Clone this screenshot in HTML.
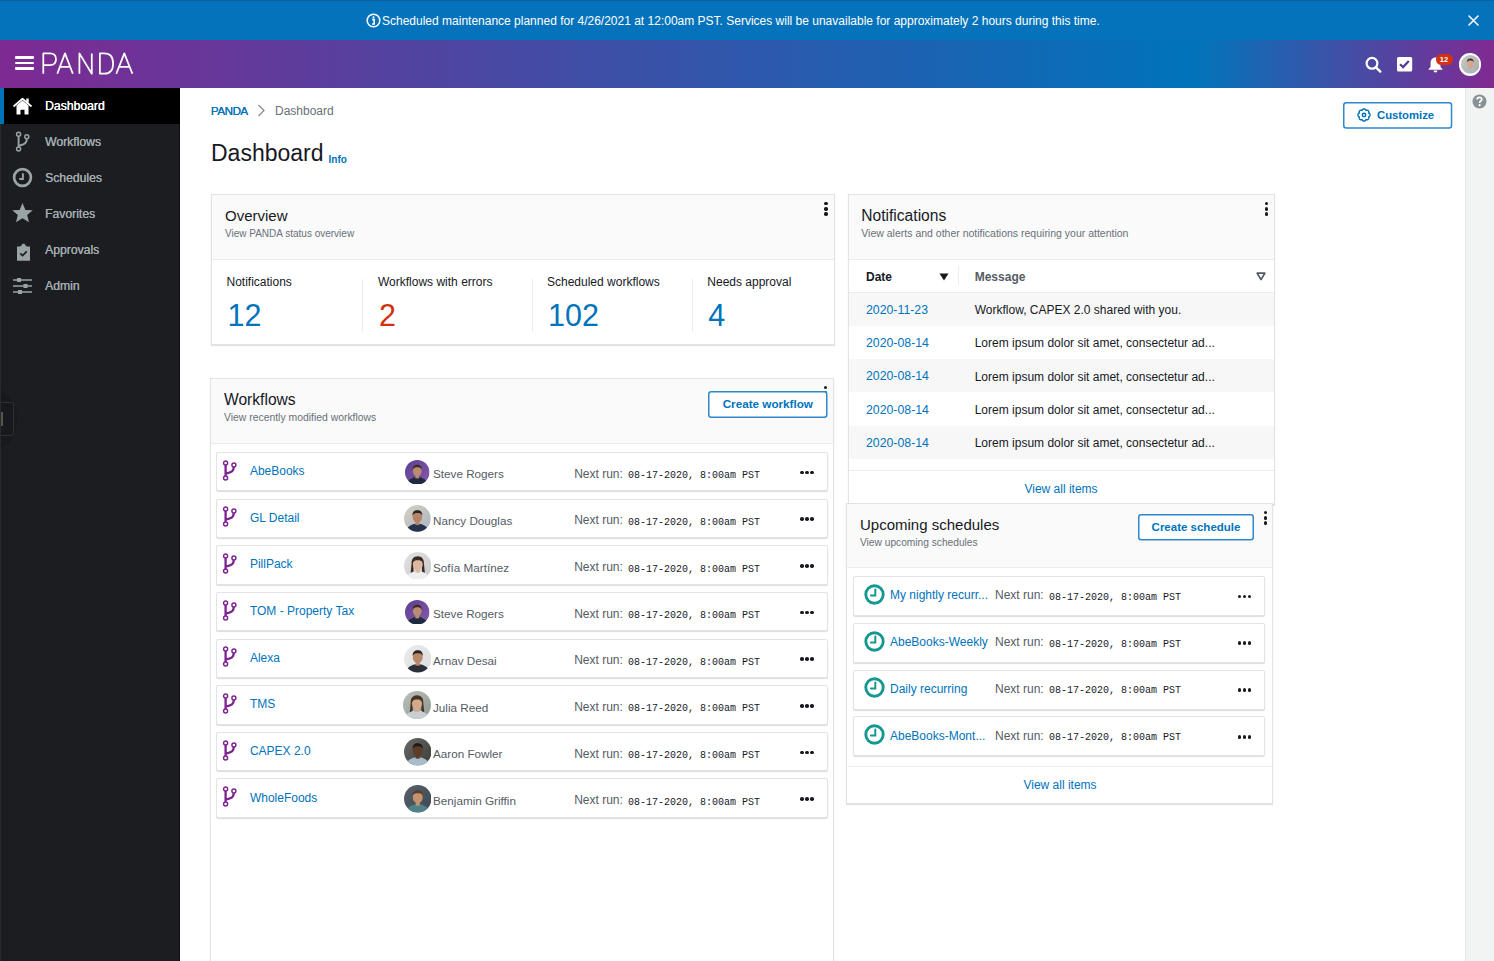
<!DOCTYPE html>
<html><head><meta charset="utf-8"><title>PANDA Dashboard</title>
<style>
html,body{margin:0;padding:0;width:1494px;height:961px;overflow:hidden;background:#fff;font-family:'Liberation Sans', sans-serif;}
.t{position:absolute;white-space:nowrap;}
</style></head><body>
<div style="position:absolute;left:0px;top:0px;width:1494px;height:40px;background:#0573bb;"></div>
<div style="position:absolute;left:0px;top:0px;width:1494px;height:1px;background:#0b5f9c;"></div>
<svg style="position:absolute;left:366px;top:13px" width="15" height="15" viewBox="0 0 15 15"><circle cx="7.5" cy="7.5" r="6.3" fill="none" stroke="#fff" stroke-width="1.6"/><circle cx="7.5" cy="4.4" r="1.1" fill="#fff"/><path d="M6.2 6.6h2v4.4M6 11h3" stroke="#fff" stroke-width="1.6" fill="none"/></svg>
<div class="t" style="left:382px;top:14.54px;font-size:12px;line-height:12px;color:#fff;font-weight:400;font-family:'Liberation Sans', sans-serif;">Scheduled maintenance planned for 4/26/2021 at 12:00am PST. Services will be unavailable for approximately 2 hours during this time.</div>
<svg style="position:absolute;left:1467.5px;top:15px" width="11" height="11" viewBox="0 0 11 11"><path d="M1 1L10 10M10 1L1 10" stroke="#fafafa" stroke-width="1.6" stroke-linecap="round"/></svg>
<div style="position:absolute;left:0px;top:40px;width:1494px;height:48px;background:linear-gradient(90deg,#7d2a92 0px,#0073bb 1185px,#0672b9 1205px,#802a92 1494px);"></div>
<div style="position:absolute;left:15px;top:56px;width:19px;height:2.6px;background:#fff;border-radius:1px;"></div>
<div style="position:absolute;left:15px;top:61.6px;width:19px;height:2.6px;background:#fff;border-radius:1px;"></div>
<div style="position:absolute;left:15px;top:67.2px;width:19px;height:2.6px;background:#fff;border-radius:1px;"></div>
<svg style="position:absolute;left:0;top:0" width="140" height="88" viewBox="0 0 140 88"><g fill="none" stroke="#fff" stroke-width="1.75" stroke-linejoin="round"><path d="M43.3 73.7V53.4H50C54 53.4 56 55.9 56 59.3C56 62.8 54 65.2 50 65.2H43.3"/><path d="M57.3 73.7L65 53.4L72.8 73.7M59.9 66.9H70.3"/><path d="M79.4 73.7V53.4L91.8 73.7V53.4"/><path d="M99.9 73.7V53.4H104.3C110.3 53.4 113.1 57.6 113.1 63.5C113.1 69.5 110.3 73.7 104.3 73.7Z"/><path d="M116.3 73.7L124.3 53.4L132.4 73.7M118.9 66.9H129.8"/></g></svg>
<svg style="position:absolute;left:1364px;top:55px" width="20" height="20" viewBox="0 0 20 20"><circle cx="8" cy="8.3" r="5.4" fill="none" stroke="#fff" stroke-width="2.2"/><path d="M12 12.3L16.3 16.6" stroke="#fff" stroke-width="2.4" stroke-linecap="round"/></svg>
<svg style="position:absolute;left:1396px;top:56px" width="17" height="17" viewBox="0 0 17 17"><rect x="1" y="1" width="15.2" height="14.6" rx="1.6" fill="#fff"/><path d="M4 8.2L7.1 11.1L12.8 5" fill="none" stroke="#5a3898" stroke-width="2.2"/></svg>
<svg style="position:absolute;left:1426px;top:55px" width="19" height="19" viewBox="0 0 19 19"><path d="M9.5 2.5C6.3 2.5 4.6 4.9 4.6 8V11.8L2.2 14.8H16.8L14.4 11.8V8C14.4 4.9 12.7 2.5 9.5 2.5Z" fill="#fff"/><path d="M7.6 15.6a1.9 1.9 0 0 0 3.8 0z" fill="#fff"/></svg>
<div style="position:absolute;left:1436px;top:54.3px;width:16.5px;height:10.5px;background:#d13212;border-radius:6px;"></div>
<div class="t" style="left:1437.5px;top:56.05px;font-size:7.5px;line-height:7.5px;color:#fff;font-weight:700;font-family:'Liberation Sans', sans-serif;width:13px;text-align:center;">12</div>
<div style="position:absolute;left:1458.6px;top:53.4px;width:22.4px;height:22.4px;border-radius:50%;background:#fff;"></div>
<svg style="position:absolute;left:1460.50px;top:55.30px" width="18.6" height="18.6" viewBox="0 0 24 24"><defs><clipPath id="av1"><circle cx="12" cy="12" r="12"/></clipPath><linearGradient id="ag1" x1="0" y1="0" x2="1" y2="1"><stop offset="0" stop-color="#c9c9c7"/><stop offset="1" stop-color="#a9aaa8"/></linearGradient></defs><g clip-path="url(#av1)"><rect width="24" height="24" fill="url(#ag1)"/><ellipse cx="12" cy="25" rx="10.5" ry="8.5" fill="#aeb8bf"/><rect x="10.2" y="13" width="3.6" height="5" fill="#d4a78e"/><ellipse cx="12" cy="10.6" rx="4.3" ry="5.3" fill="#d4a78e"/><path d="M7.6 9.6C7.4 6.2 9.2 4.6 12 4.6S16.6 6.2 16.4 9.6C15.6 7.6 14 7.2 12 7.2S8.4 7.6 7.6 9.6Z" fill="#2e3036"/></g></svg>
<div style="position:absolute;left:0px;top:88px;width:180px;height:873px;background:#1b1d21;"></div>
<div style="position:absolute;left:179px;top:88px;width:1px;height:873px;background:#0d0f13;"></div>
<div style="position:absolute;left:0px;top:88px;width:180px;height:36px;background:#000;"></div>
<div style="position:absolute;left:-20px;top:391px;width:37px;height:57px;border-radius:50%;background:#17191d;"></div>
<div style="position:absolute;left:-2px;top:401.5px;width:15.5px;height:34.5px;border:1.3px solid #2c2f33;border-radius:2px;box-sizing:border-box;"></div>
<div style="position:absolute;left:0px;top:412px;width:3px;height:14px;background:#50554a;border:0.8px solid #5a5840;box-sizing:border-box;"></div>
<div style="position:absolute;left:0px;top:124px;width:1px;height:837px;background:#26292d;"></div>
<div style="position:absolute;left:0px;top:88px;width:4px;height:36px;background:#0073bb;"></div>
<div class="t" style="left:45px;top:100.17px;font-size:12.2px;line-height:12.2px;color:#fff;font-weight:400;font-family:'Liberation Sans', sans-serif;text-shadow:0.3px 0 0 #fff;">Dashboard</div>
<div class="t" style="left:45px;top:136.17px;font-size:12.2px;line-height:12.2px;color:#a3adb0;font-weight:400;font-family:'Liberation Sans', sans-serif;text-shadow:0.15px 0 0 #a3adb0;">Workflows</div>
<div class="t" style="left:45px;top:172.17px;font-size:12.2px;line-height:12.2px;color:#a3adb0;font-weight:400;font-family:'Liberation Sans', sans-serif;text-shadow:0.15px 0 0 #a3adb0;">Schedules</div>
<div class="t" style="left:45px;top:208.17px;font-size:12.2px;line-height:12.2px;color:#a3adb0;font-weight:400;font-family:'Liberation Sans', sans-serif;text-shadow:0.15px 0 0 #a3adb0;">Favorites</div>
<div class="t" style="left:45px;top:244.17px;font-size:12.2px;line-height:12.2px;color:#a3adb0;font-weight:400;font-family:'Liberation Sans', sans-serif;text-shadow:0.15px 0 0 #a3adb0;">Approvals</div>
<div class="t" style="left:45px;top:280.17px;font-size:12.2px;line-height:12.2px;color:#a3adb0;font-weight:400;font-family:'Liberation Sans', sans-serif;text-shadow:0.15px 0 0 #a3adb0;">Admin</div>
<svg style="position:absolute;left:12px;top:97px" width="21" height="19" viewBox="0 0 21 19"><path d="M1.5 9.5L10.5 1.8L19.5 9.5" fill="none" stroke="#fff" stroke-width="1.8" stroke-linejoin="round"/><path d="M4.5 8.5V17.5H8.5V12.8H12.5V17.5H16.5V8.5L10.5 3.5Z" fill="#fff"/><rect x="14.3" y="1.5" width="2.4" height="5" fill="#fff"/></svg>
<svg style="position:absolute;left:14px;top:131px" width="18" height="21" viewBox="0 0 18 21"><g fill="none" stroke="#9aa3a6"><circle cx="4.6" cy="3.2" r="2" stroke-width="1.5"/><circle cx="12.8" cy="5.7" r="2" stroke-width="1.5"/><circle cx="4.6" cy="18" r="2" stroke-width="1.5"/><path d="M4.6 5.2V16M12.8 7.7C12.8 12 11 13.4 4.8 14.8" stroke-width="1.9"/></g></svg>
<svg style="position:absolute;left:11.7px;top:167.3px" width="21" height="21" viewBox="0 0 21 21"><circle cx="10.5" cy="10.5" r="8.4" fill="none" stroke="#9aa3a6" stroke-width="2.7"/><path d="M10.9 6.2V12H7.3" fill="none" stroke="#9aa3a6" stroke-width="1.9"/></svg>
<svg style="position:absolute;left:11px;top:202px" width="23" height="22" viewBox="0 0 23 22"><path d="M11.5 1L14.4 7.9L21.7 8.3L16.2 13L18 20.3L11.5 16.3L5 20.3L6.8 13L1.3 8.3L8.6 7.9Z" fill="#9aa3a6"/></svg>
<svg style="position:absolute;left:15px;top:243px" width="17" height="19" viewBox="0 0 17 19"><path d="M2 3.5H5.5V2.8H6.5C6.6 1.3 7.4 0.8 8.5 0.8S10.4 1.3 10.5 2.8H11.5V3.5H15V17.8H2Z" fill="#9aa3a6"/><path d="M5.3 10.4L7.6 12.6L11.8 8.3" fill="none" stroke="#1b1d21" stroke-width="1.7"/></svg>
<svg style="position:absolute;left:12px;top:277px" width="21" height="18" viewBox="0 0 21 18"><path d="M1 3H20M1 9H20M1 15H20" stroke="#9aa3a6" stroke-width="1.5"/><rect x="5" y="1" width="4" height="4" fill="#9aa3a6"/><rect x="11.5" y="7" width="4" height="4" fill="#9aa3a6"/><rect x="6" y="13" width="4" height="4" fill="#9aa3a6"/></svg>
<div style="position:absolute;left:1465px;top:88px;width:29px;height:873px;background:#f2f3f3;border-left:1px solid #e4e7e7;box-sizing:border-box;"></div>
<svg style="position:absolute;left:1472px;top:93.5px" width="15" height="15" viewBox="0 0 15 15"><circle cx="7.5" cy="7.5" r="7" fill="#879196"/><path d="M5.2 5.6C5.2 4.2 6.2 3.4 7.5 3.4S9.8 4.2 9.8 5.5C9.8 7 7.6 7.1 7.6 8.9" fill="none" stroke="#fff" stroke-width="1.7"/><circle cx="7.6" cy="11.2" r="1.1" fill="#fff"/></svg>
<div class="t" style="left:210.8px;top:105.08px;font-size:11.6px;line-height:11.6px;color:#0073bb;font-weight:400;font-family:'Liberation Sans', sans-serif;letter-spacing:-0.45px;text-shadow:0.25px 0 0 #0073bb;">PANDA</div>
<svg style="position:absolute;left:257px;top:104px" width="9" height="13" viewBox="0 0 9 13"><path d="M1.5 1L7 6.5L1.5 12" fill="none" stroke="#879196" stroke-width="1.3"/></svg>
<div class="t" style="left:275px;top:104.64px;font-size:12px;line-height:12px;color:#687078;font-weight:400;font-family:'Liberation Sans', sans-serif;">Dashboard</div>
<div class="t" style="left:211px;top:142.43px;font-size:23px;line-height:23px;color:#16191f;font-weight:400;font-family:'Liberation Sans', sans-serif;">Dashboard</div>
<div class="t" style="left:328.5px;top:155.44px;font-size:10px;line-height:10px;color:#0073bb;font-weight:700;font-family:'Liberation Sans', sans-serif;">Info</div>
<svg style="position:absolute;left:1342.5px;top:102px" width="110.3" height="27.8" viewBox="0 0 110.3 27.8"><rect x="0.75" y="0.75" width="107.8" height="25.3" rx="2.5" fill="#fff" stroke="#2f88c9" stroke-width="1.5"/></svg>
<svg style="position:absolute;left:1356.6px;top:108.1px" width="14" height="14" viewBox="0 0 14 14"><path d="M13.00 7.00 L12.99 7.24 L12.94 7.47 L12.87 7.69 L12.77 7.91 L12.65 8.12 L12.50 8.32 L12.32 8.50 L12.13 8.67 L11.90 8.81 L11.62 8.91 L11.75 9.19 L11.80 9.45 L11.83 9.70 L11.82 9.95 L11.79 10.20 L11.73 10.44 L11.64 10.66 L11.53 10.87 L11.40 11.07 L11.24 11.24 L11.07 11.40 L10.87 11.53 L10.66 11.64 L10.44 11.73 L10.20 11.79 L9.95 11.82 L9.70 11.83 L9.45 11.80 L9.19 11.75 L8.91 11.62 L8.81 11.90 L8.67 12.13 L8.50 12.32 L8.32 12.50 L8.12 12.65 L7.91 12.77 L7.69 12.87 L7.47 12.94 L7.24 12.99 L7.00 13.00 L6.76 12.99 L6.53 12.94 L6.31 12.87 L6.09 12.77 L5.88 12.65 L5.68 12.50 L5.50 12.32 L5.33 12.13 L5.19 11.90 L5.09 11.62 L4.81 11.75 L4.55 11.80 L4.30 11.83 L4.05 11.82 L3.80 11.79 L3.56 11.73 L3.34 11.64 L3.13 11.53 L2.93 11.40 L2.76 11.24 L2.60 11.07 L2.47 10.87 L2.36 10.66 L2.27 10.44 L2.21 10.20 L2.18 9.95 L2.17 9.70 L2.20 9.45 L2.25 9.19 L2.38 8.91 L2.10 8.81 L1.87 8.67 L1.68 8.50 L1.50 8.32 L1.35 8.12 L1.23 7.91 L1.13 7.69 L1.06 7.47 L1.01 7.24 L1.00 7.00 L1.01 6.76 L1.06 6.53 L1.13 6.31 L1.23 6.09 L1.35 5.88 L1.50 5.68 L1.68 5.50 L1.87 5.33 L2.10 5.19 L2.38 5.09 L2.25 4.81 L2.20 4.55 L2.17 4.30 L2.18 4.05 L2.21 3.80 L2.27 3.56 L2.36 3.34 L2.47 3.13 L2.60 2.93 L2.76 2.76 L2.93 2.60 L3.13 2.47 L3.34 2.36 L3.56 2.27 L3.80 2.21 L4.05 2.18 L4.30 2.17 L4.55 2.20 L4.81 2.25 L5.09 2.38 L5.19 2.10 L5.33 1.87 L5.50 1.68 L5.68 1.50 L5.88 1.35 L6.09 1.23 L6.31 1.13 L6.53 1.06 L6.76 1.01 L7.00 1.00 L7.24 1.01 L7.47 1.06 L7.69 1.13 L7.91 1.23 L8.12 1.35 L8.32 1.50 L8.50 1.68 L8.67 1.87 L8.81 2.10 L8.91 2.38 L9.19 2.25 L9.45 2.20 L9.70 2.17 L9.95 2.18 L10.20 2.21 L10.44 2.27 L10.66 2.36 L10.87 2.47 L11.07 2.60 L11.24 2.76 L11.40 2.93 L11.53 3.13 L11.64 3.34 L11.73 3.56 L11.79 3.80 L11.82 4.05 L11.83 4.30 L11.80 4.55 L11.75 4.81 L11.62 5.09 L11.90 5.19 L12.13 5.33 L12.32 5.50 L12.50 5.68 L12.65 5.88 L12.77 6.09 L12.87 6.31 L12.94 6.53 L12.99 6.76 L13.00 7.00Z" fill="none" stroke="#0073bb" stroke-width="1.45" stroke-linejoin="round"/><circle cx="7" cy="7" r="1.7" fill="none" stroke="#0073bb" stroke-width="1.5"/></svg>
<div class="t" style="left:1377px;top:109.93px;font-size:11.3px;line-height:11.3px;color:#0073bb;font-weight:700;font-family:'Liberation Sans', sans-serif;">Customize</div>
<div style="position:absolute;left:211px;top:194px;width:623.5px;height:151px;background:#fff;border:1px solid #e1e4e4;box-sizing:border-box;box-shadow:0 1px 1px rgba(0,28,36,.12);"></div>
<div style="position:absolute;left:212px;top:195px;width:621.5px;height:65px;background:#fafafa;border-bottom:1px solid #eaeded;box-sizing:border-box;"></div>
<div class="t" style="left:225px;top:207.60px;font-size:15px;line-height:15px;color:#16191f;font-weight:400;font-family:'Liberation Sans', sans-serif;">Overview</div>
<div class="t" style="left:225px;top:228.53px;font-size:10px;line-height:10px;color:#687078;font-weight:400;font-family:'Liberation Sans', sans-serif;">View PANDA status overview</div>
<div style="position:absolute;left:824.4px;top:202.2px;width:3.3px;height:3.3px;background:#16191f;border-radius:50%;"></div>
<div style="position:absolute;left:824.4px;top:207.29999999999998px;width:3.3px;height:3.3px;background:#16191f;border-radius:50%;"></div>
<div style="position:absolute;left:824.4px;top:212.39999999999998px;width:3.3px;height:3.3px;background:#16191f;border-radius:50%;"></div>
<div class="t" style="left:226.5px;top:276.44px;font-size:12px;line-height:12px;color:#16191f;font-weight:400;font-family:'Liberation Sans', sans-serif;">Notifications</div>
<div class="t" style="left:227.5px;top:300.08px;font-size:30.5px;line-height:30.5px;color:#0073bb;font-weight:400;font-family:'Liberation Sans', sans-serif;">12</div>
<div class="t" style="left:378px;top:276.44px;font-size:12px;line-height:12px;color:#16191f;font-weight:400;font-family:'Liberation Sans', sans-serif;">Workflows with errors</div>
<div class="t" style="left:379px;top:300.08px;font-size:30.5px;line-height:30.5px;color:#d13212;font-weight:400;font-family:'Liberation Sans', sans-serif;">2</div>
<div class="t" style="left:547px;top:276.44px;font-size:12px;line-height:12px;color:#16191f;font-weight:400;font-family:'Liberation Sans', sans-serif;">Scheduled workflows</div>
<div class="t" style="left:548px;top:300.08px;font-size:30.5px;line-height:30.5px;color:#0073bb;font-weight:400;font-family:'Liberation Sans', sans-serif;">102</div>
<div class="t" style="left:707.3px;top:276.44px;font-size:12px;line-height:12px;color:#16191f;font-weight:400;font-family:'Liberation Sans', sans-serif;">Needs approval</div>
<div class="t" style="left:708.3px;top:300.08px;font-size:30.5px;line-height:30.5px;color:#0073bb;font-weight:400;font-family:'Liberation Sans', sans-serif;">4</div>
<div style="position:absolute;left:362.3px;top:279px;width:1px;height:53px;background:#eaeded;"></div>
<div style="position:absolute;left:531.5px;top:279px;width:1px;height:53px;background:#eaeded;"></div>
<div style="position:absolute;left:692px;top:279px;width:1px;height:53px;background:#eaeded;"></div>
<div style="position:absolute;left:847.8px;top:194.4px;width:427px;height:311px;background:#fff;border:1px solid #e1e4e4;box-sizing:border-box;box-shadow:0 1px 1px rgba(0,28,36,.12);"></div>
<div style="position:absolute;left:848.8px;top:195.4px;width:425px;height:65px;background:#fafafa;border-bottom:1px solid #eaeded;box-sizing:border-box;"></div>
<div class="t" style="left:861.3px;top:207.79px;font-size:15.6px;line-height:15.6px;color:#16191f;font-weight:400;font-family:'Liberation Sans', sans-serif;">Notifications</div>
<div class="t" style="left:861.3px;top:227.81px;font-size:10.5px;line-height:10.5px;color:#687078;font-weight:400;font-family:'Liberation Sans', sans-serif;">View alerts and other notifications requiring your attention</div>
<div style="position:absolute;left:1264.6px;top:202.2px;width:3.3px;height:3.3px;background:#16191f;border-radius:50%;"></div>
<div style="position:absolute;left:1264.6px;top:207.29999999999998px;width:3.3px;height:3.3px;background:#16191f;border-radius:50%;"></div>
<div style="position:absolute;left:1264.6px;top:212.39999999999998px;width:3.3px;height:3.3px;background:#16191f;border-radius:50%;"></div>
<div style="position:absolute;left:848.8px;top:260.4px;width:425px;height:32.6px;background:#fff;border-bottom:1px solid #eaeded;box-sizing:border-box;"></div>
<div class="t" style="left:866px;top:271.04px;font-size:12px;line-height:12px;color:#16191f;font-weight:700;font-family:'Liberation Sans', sans-serif;">Date</div>
<svg style="position:absolute;left:939px;top:273px" width="10" height="8" viewBox="0 0 10 8"><path d="M0.5 0.5H9.5L5 7.5Z" fill="#16191f"/></svg>
<div style="position:absolute;left:957.5px;top:266px;width:1px;height:19px;background:#eaeded;"></div>
<div class="t" style="left:974.7px;top:271.04px;font-size:12px;line-height:12px;color:#545b64;font-weight:700;font-family:'Liberation Sans', sans-serif;">Message</div>
<svg style="position:absolute;left:1256px;top:272px" width="10" height="9" viewBox="0 0 10 9"><path d="M1.2 1.2H8.8L5 7.6Z" fill="none" stroke="#545b64" stroke-width="1.7" stroke-linejoin="round"/></svg>
<div style="position:absolute;left:848.8px;top:292.6px;width:425px;height:33.3px;background:#f7f7f7;"></div>
<div class="t" style="left:866px;top:303.69px;font-size:12.3px;line-height:12.3px;color:#0073bb;font-weight:400;font-family:'Liberation Sans', sans-serif;">2020-11-23</div>
<div class="t" style="left:974.7px;top:304.04px;font-size:12px;line-height:12px;color:#16191f;font-weight:400;font-family:'Liberation Sans', sans-serif;">Workflow, CAPEX 2.0 shared with you.</div>
<div class="t" style="left:866px;top:336.99px;font-size:12.3px;line-height:12.3px;color:#0073bb;font-weight:400;font-family:'Liberation Sans', sans-serif;">2020-08-14</div>
<div class="t" style="left:974.7px;top:337.34px;font-size:12px;line-height:12px;color:#16191f;font-weight:400;font-family:'Liberation Sans', sans-serif;">Lorem ipsum dolor sit amet, consectetur ad...</div>
<div style="position:absolute;left:848.8px;top:359.20000000000005px;width:425px;height:33.3px;background:#f7f7f7;"></div>
<div class="t" style="left:866px;top:370.29px;font-size:12.3px;line-height:12.3px;color:#0073bb;font-weight:400;font-family:'Liberation Sans', sans-serif;">2020-08-14</div>
<div class="t" style="left:974.7px;top:370.64px;font-size:12px;line-height:12px;color:#16191f;font-weight:400;font-family:'Liberation Sans', sans-serif;">Lorem ipsum dolor sit amet, consectetur ad...</div>
<div class="t" style="left:866px;top:403.59px;font-size:12.3px;line-height:12.3px;color:#0073bb;font-weight:400;font-family:'Liberation Sans', sans-serif;">2020-08-14</div>
<div class="t" style="left:974.7px;top:403.94px;font-size:12px;line-height:12px;color:#16191f;font-weight:400;font-family:'Liberation Sans', sans-serif;">Lorem ipsum dolor sit amet, consectetur ad...</div>
<div style="position:absolute;left:848.8px;top:425.8px;width:425px;height:33.3px;background:#f7f7f7;"></div>
<div class="t" style="left:866px;top:436.89px;font-size:12.3px;line-height:12.3px;color:#0073bb;font-weight:400;font-family:'Liberation Sans', sans-serif;">2020-08-14</div>
<div class="t" style="left:974.7px;top:437.24px;font-size:12px;line-height:12px;color:#16191f;font-weight:400;font-family:'Liberation Sans', sans-serif;">Lorem ipsum dolor sit amet, consectetur ad...</div>
<div style="position:absolute;left:848.8px;top:470px;width:425px;height:1px;background:#eaeded;"></div>
<div class="t" style="left:1061px;width:0;display:flex;justify-content:center;top:483.14px;font-size:12px;line-height:12px;color:#0073bb;font-weight:400;font-family:'Liberation Sans', sans-serif;">View all items</div>
<div style="position:absolute;left:846.2px;top:503.3px;width:427px;height:300.5px;background:#fff;border:1px solid #e1e4e4;box-sizing:border-box;box-shadow:0 1px 1px rgba(0,28,36,.12);"></div>
<div style="position:absolute;left:847.2px;top:504.3px;width:425px;height:64px;background:#fafafa;border-bottom:1px solid #eaeded;box-sizing:border-box;"></div>
<div class="t" style="left:860px;top:517.30px;font-size:15px;line-height:15px;color:#16191f;font-weight:400;font-family:'Liberation Sans', sans-serif;">Upcoming schedules</div>
<div class="t" style="left:860px;top:537.87px;font-size:10.2px;line-height:10.2px;color:#687078;font-weight:400;font-family:'Liberation Sans', sans-serif;">View upcoming schedules</div>
<svg style="position:absolute;left:1138px;top:514.3px" width="117" height="27.5" viewBox="0 0 117 27.5"><rect x="0.75" y="0.75" width="114.5" height="25.0" rx="2.5" fill="#fff" stroke="#2f88c9" stroke-width="1.5"/></svg>
<div class="t" style="left:1196px;width:0;display:flex;justify-content:center;top:522.07px;font-size:11.5px;line-height:11.5px;color:#0073bb;font-weight:700;font-family:'Liberation Sans', sans-serif;">Create schedule</div>
<div style="position:absolute;left:1263.8px;top:511.2px;width:3.3px;height:3.3px;background:#16191f;border-radius:50%;"></div>
<div style="position:absolute;left:1263.8px;top:516.3px;width:3.3px;height:3.3px;background:#16191f;border-radius:50%;"></div>
<div style="position:absolute;left:1263.8px;top:521.4px;width:3.3px;height:3.3px;background:#16191f;border-radius:50%;"></div>
<div style="position:absolute;left:852.6px;top:576.0px;width:412.5px;height:40px;background:#fff;border:1px solid #e1e4e4;border-radius:2px;box-sizing:border-box;box-shadow:0 1px 1px rgba(0,28,36,.15);"></div>
<svg style="position:absolute;left:864.1px;top:583.7px" width="21" height="21" viewBox="0 0 21 21"><circle cx="10.5" cy="10.5" r="8.7" fill="none" stroke="#16978f" stroke-width="2.9"/><path d="M11.3 5.4V11.5H6.9" fill="none" stroke="#16978f" stroke-width="2" stroke-linecap="round"/></svg>
<div class="t" style="left:890px;top:589.34px;font-size:12px;line-height:12px;color:#0073bb;font-weight:400;font-family:'Liberation Sans', sans-serif;">My nightly recurr...</div>
<div class="t" style="left:995px;top:589.34px;font-size:12px;line-height:12px;color:#545b64;font-weight:400;font-family:'Liberation Sans', sans-serif;">Next run:</div>
<div class="t" style="left:1049px;top:592.84px;font-size:10px;line-height:10px;color:#16191f;font-weight:400;font-family:'Liberation Mono', monospace;">08-17-2020, 8:00am PST</div>
<div style="position:absolute;left:1237.5px;top:594.6px;width:3.6px;height:3.6px;background:#16191f;border-radius:50%;"></div>
<div style="position:absolute;left:1242.5px;top:594.6px;width:3.6px;height:3.6px;background:#16191f;border-radius:50%;"></div>
<div style="position:absolute;left:1247.5px;top:594.6px;width:3.6px;height:3.6px;background:#16191f;border-radius:50%;"></div>
<div style="position:absolute;left:852.6px;top:622.8px;width:412.5px;height:40px;background:#fff;border:1px solid #e1e4e4;border-radius:2px;box-sizing:border-box;box-shadow:0 1px 1px rgba(0,28,36,.15);"></div>
<svg style="position:absolute;left:864.1px;top:630.5px" width="21" height="21" viewBox="0 0 21 21"><circle cx="10.5" cy="10.5" r="8.7" fill="none" stroke="#16978f" stroke-width="2.9"/><path d="M11.3 5.4V11.5H6.9" fill="none" stroke="#16978f" stroke-width="2" stroke-linecap="round"/></svg>
<div class="t" style="left:890px;top:636.14px;font-size:12px;line-height:12px;color:#0073bb;font-weight:400;font-family:'Liberation Sans', sans-serif;">AbeBooks-Weekly</div>
<div class="t" style="left:995px;top:636.14px;font-size:12px;line-height:12px;color:#545b64;font-weight:400;font-family:'Liberation Sans', sans-serif;">Next run:</div>
<div class="t" style="left:1049px;top:639.63px;font-size:10px;line-height:10px;color:#16191f;font-weight:400;font-family:'Liberation Mono', monospace;">08-17-2020, 8:00am PST</div>
<div style="position:absolute;left:1237.5px;top:641.4px;width:3.6px;height:3.6px;background:#16191f;border-radius:50%;"></div>
<div style="position:absolute;left:1242.5px;top:641.4px;width:3.6px;height:3.6px;background:#16191f;border-radius:50%;"></div>
<div style="position:absolute;left:1247.5px;top:641.4px;width:3.6px;height:3.6px;background:#16191f;border-radius:50%;"></div>
<div style="position:absolute;left:852.6px;top:669.6px;width:412.5px;height:40px;background:#fff;border:1px solid #e1e4e4;border-radius:2px;box-sizing:border-box;box-shadow:0 1px 1px rgba(0,28,36,.15);"></div>
<svg style="position:absolute;left:864.1px;top:677.3px" width="21" height="21" viewBox="0 0 21 21"><circle cx="10.5" cy="10.5" r="8.7" fill="none" stroke="#16978f" stroke-width="2.9"/><path d="M11.3 5.4V11.5H6.9" fill="none" stroke="#16978f" stroke-width="2" stroke-linecap="round"/></svg>
<div class="t" style="left:890px;top:682.94px;font-size:12px;line-height:12px;color:#0073bb;font-weight:400;font-family:'Liberation Sans', sans-serif;">Daily recurring</div>
<div class="t" style="left:995px;top:682.94px;font-size:12px;line-height:12px;color:#545b64;font-weight:400;font-family:'Liberation Sans', sans-serif;">Next run:</div>
<div class="t" style="left:1049px;top:686.44px;font-size:10px;line-height:10px;color:#16191f;font-weight:400;font-family:'Liberation Mono', monospace;">08-17-2020, 8:00am PST</div>
<div style="position:absolute;left:1237.5px;top:688.2px;width:3.6px;height:3.6px;background:#16191f;border-radius:50%;"></div>
<div style="position:absolute;left:1242.5px;top:688.2px;width:3.6px;height:3.6px;background:#16191f;border-radius:50%;"></div>
<div style="position:absolute;left:1247.5px;top:688.2px;width:3.6px;height:3.6px;background:#16191f;border-radius:50%;"></div>
<div style="position:absolute;left:852.6px;top:716.4px;width:412.5px;height:40px;background:#fff;border:1px solid #e1e4e4;border-radius:2px;box-sizing:border-box;box-shadow:0 1px 1px rgba(0,28,36,.15);"></div>
<svg style="position:absolute;left:864.1px;top:724.1px" width="21" height="21" viewBox="0 0 21 21"><circle cx="10.5" cy="10.5" r="8.7" fill="none" stroke="#16978f" stroke-width="2.9"/><path d="M11.3 5.4V11.5H6.9" fill="none" stroke="#16978f" stroke-width="2" stroke-linecap="round"/></svg>
<div class="t" style="left:890px;top:729.74px;font-size:12px;line-height:12px;color:#0073bb;font-weight:400;font-family:'Liberation Sans', sans-serif;">AbeBooks-Mont...</div>
<div class="t" style="left:995px;top:729.74px;font-size:12px;line-height:12px;color:#545b64;font-weight:400;font-family:'Liberation Sans', sans-serif;">Next run:</div>
<div class="t" style="left:1049px;top:733.24px;font-size:10px;line-height:10px;color:#16191f;font-weight:400;font-family:'Liberation Mono', monospace;">08-17-2020, 8:00am PST</div>
<div style="position:absolute;left:1237.5px;top:735.0px;width:3.6px;height:3.6px;background:#16191f;border-radius:50%;"></div>
<div style="position:absolute;left:1242.5px;top:735.0px;width:3.6px;height:3.6px;background:#16191f;border-radius:50%;"></div>
<div style="position:absolute;left:1247.5px;top:735.0px;width:3.6px;height:3.6px;background:#16191f;border-radius:50%;"></div>
<div style="position:absolute;left:847.8px;top:765.8px;width:424.5px;height:1px;background:#eaeded;"></div>
<div class="t" style="left:1060px;width:0;display:flex;justify-content:center;top:778.84px;font-size:12px;line-height:12px;color:#0073bb;font-weight:400;font-family:'Liberation Sans', sans-serif;">View all items</div>
<div style="position:absolute;left:210.2px;top:378.4px;width:623.4px;height:600px;background:#fff;border:1px solid #e1e4e4;box-sizing:border-box;box-shadow:0 1px 1px rgba(0,28,36,.12);"></div>
<div style="position:absolute;left:211.2px;top:379.4px;width:621.4px;height:65px;background:#fafafa;border-bottom:1px solid #eaeded;box-sizing:border-box;"></div>
<div class="t" style="left:224px;top:392.19px;font-size:15.6px;line-height:15.6px;color:#16191f;font-weight:400;font-family:'Liberation Sans', sans-serif;">Workflows</div>
<div class="t" style="left:224px;top:412.60px;font-size:10.4px;line-height:10.4px;color:#687078;font-weight:400;font-family:'Liberation Sans', sans-serif;">View recently modified workflows</div>
<div style="position:absolute;left:824.1px;top:386.2px;width:3.3px;height:3.3px;background:#16191f;border-radius:50%;"></div>
<div style="position:absolute;left:824.1px;top:391.3px;width:3.3px;height:3.3px;background:#16191f;border-radius:50%;"></div>
<div style="position:absolute;left:824.1px;top:396.4px;width:3.3px;height:3.3px;background:#16191f;border-radius:50%;"></div>
<svg style="position:absolute;left:708.2px;top:390.5px" width="120.5" height="28" viewBox="0 0 120.5 28"><rect x="0.75" y="0.75" width="118.0" height="25.5" rx="2.5" fill="#fff" stroke="#2f88c9" stroke-width="1.5"/></svg>
<div class="t" style="left:767.8px;width:0;display:flex;justify-content:center;top:398.30px;font-size:11.7px;line-height:11.7px;color:#0073bb;font-weight:700;font-family:'Liberation Sans', sans-serif;">Create workflow</div>
<div style="position:absolute;left:216.3px;top:451.9px;width:611.4px;height:39.6px;background:#fff;border:1px solid #e1e4e4;border-radius:2px;box-sizing:border-box;box-shadow:0 1px 1px rgba(0,28,36,.15);"></div>
<svg style="position:absolute;left:220px;top:458.7px" width="18" height="24" viewBox="0 0 18 24"><g fill="none" stroke="#7d2291"><circle cx="5.6" cy="3.9" r="2.0" stroke-width="1.45"/><circle cx="13.9" cy="5.9" r="2.0" stroke-width="1.45"/><circle cx="5.6" cy="18.9" r="2.0" stroke-width="1.45"/><path d="M5.6 5.9V16.9M13.8 7.9C13.8 12 11.6 13.3 5.8 14.6" stroke-width="2.3"/></g></svg>
<div class="t" style="left:249.9px;top:465.04px;font-size:12px;line-height:12px;color:#0073bb;font-weight:400;font-family:'Liberation Sans', sans-serif;">AbeBooks</div>
<svg style="position:absolute;left:405.05px;top:459.95px" width="24.5" height="24.5" viewBox="0 0 24 24"><defs><clipPath id="av2"><circle cx="12" cy="12" r="12"/></clipPath><linearGradient id="ag2" x1="0" y1="0" x2="1" y2="1"><stop offset="0" stop-color="#5b3f93"/><stop offset="1" stop-color="#8a5aa8"/></linearGradient></defs><g clip-path="url(#av2)"><rect width="24" height="24" fill="url(#ag2)"/><ellipse cx="12" cy="25" rx="10.5" ry="8.5" fill="#1e2a40"/><rect x="10.2" y="13" width="3.6" height="5" fill="#b98c72"/><ellipse cx="12" cy="10.6" rx="4.3" ry="5.3" fill="#b98c72"/><path d="M7.6 9.6C7.4 6.2 9.2 4.6 12 4.6S16.6 6.2 16.4 9.6C15.6 7.6 14 7.2 12 7.2S8.4 7.6 7.6 9.6Z" fill="#3a2a22"/></g></svg>
<div class="t" style="left:433px;top:468.30px;font-size:11.7px;line-height:11.7px;color:#545b64;font-weight:400;font-family:'Liberation Sans', sans-serif;">Steve Rogers</div>
<div class="t" style="left:574.2px;top:467.64px;font-size:12px;line-height:12px;color:#545b64;font-weight:400;font-family:'Liberation Sans', sans-serif;">Next run:</div>
<div class="t" style="left:628px;top:471.23px;font-size:10px;line-height:10px;color:#16191f;font-weight:400;font-family:'Liberation Mono', monospace;">08-17-2020, 8:00am PST</div>
<div style="position:absolute;left:800px;top:470.79999999999995px;width:3.6px;height:3.6px;background:#16191f;border-radius:50%;"></div>
<div style="position:absolute;left:805px;top:470.79999999999995px;width:3.6px;height:3.6px;background:#16191f;border-radius:50%;"></div>
<div style="position:absolute;left:810px;top:470.79999999999995px;width:3.6px;height:3.6px;background:#16191f;border-radius:50%;"></div>
<div style="position:absolute;left:216.3px;top:498.54999999999995px;width:611.4px;height:39.6px;background:#fff;border:1px solid #e1e4e4;border-radius:2px;box-sizing:border-box;box-shadow:0 1px 1px rgba(0,28,36,.15);"></div>
<svg style="position:absolute;left:220px;top:505.3px" width="18" height="24" viewBox="0 0 18 24"><g fill="none" stroke="#7d2291"><circle cx="5.6" cy="3.9" r="2.0" stroke-width="1.45"/><circle cx="13.9" cy="5.9" r="2.0" stroke-width="1.45"/><circle cx="5.6" cy="18.9" r="2.0" stroke-width="1.45"/><path d="M5.6 5.9V16.9M13.8 7.9C13.8 12 11.6 13.3 5.8 14.6" stroke-width="2.3"/></g></svg>
<div class="t" style="left:249.9px;top:511.69px;font-size:12px;line-height:12px;color:#0073bb;font-weight:400;font-family:'Liberation Sans', sans-serif;">GL Detail</div>
<svg style="position:absolute;left:403.90px;top:505.45px" width="26.8" height="26.8" viewBox="0 0 24 24"><defs><clipPath id="av3"><circle cx="12" cy="12" r="12"/></clipPath><linearGradient id="ag3" x1="0" y1="0" x2="1" y2="1"><stop offset="0" stop-color="#d6d0c2"/><stop offset="1" stop-color="#a9b6bf"/></linearGradient></defs><g clip-path="url(#av3)"><rect width="24" height="24" fill="url(#ag3)"/><ellipse cx="12" cy="25" rx="10.5" ry="8.5" fill="#25344c"/><rect x="10.2" y="13" width="3.6" height="5" fill="#b5836a"/><ellipse cx="12" cy="10.6" rx="4.3" ry="5.3" fill="#b5836a"/><path d="M7.6 9.6C7.4 6.2 9.2 4.6 12 4.6S16.6 6.2 16.4 9.6C15.6 7.6 14 7.2 12 7.2S8.4 7.6 7.6 9.6Z" fill="#2a2220"/></g></svg>
<div class="t" style="left:433px;top:514.95px;font-size:11.7px;line-height:11.7px;color:#545b64;font-weight:400;font-family:'Liberation Sans', sans-serif;">Nancy Douglas</div>
<div class="t" style="left:574.2px;top:514.29px;font-size:12px;line-height:12px;color:#545b64;font-weight:400;font-family:'Liberation Sans', sans-serif;">Next run:</div>
<div class="t" style="left:628px;top:517.88px;font-size:10px;line-height:10px;color:#16191f;font-weight:400;font-family:'Liberation Mono', monospace;">08-17-2020, 8:00am PST</div>
<div style="position:absolute;left:800px;top:517.4499999999999px;width:3.6px;height:3.6px;background:#16191f;border-radius:50%;"></div>
<div style="position:absolute;left:805px;top:517.4499999999999px;width:3.6px;height:3.6px;background:#16191f;border-radius:50%;"></div>
<div style="position:absolute;left:810px;top:517.4499999999999px;width:3.6px;height:3.6px;background:#16191f;border-radius:50%;"></div>
<div style="position:absolute;left:216.3px;top:545.1999999999999px;width:611.4px;height:39.6px;background:#fff;border:1px solid #e1e4e4;border-radius:2px;box-sizing:border-box;box-shadow:0 1px 1px rgba(0,28,36,.15);"></div>
<svg style="position:absolute;left:220px;top:552.0px" width="18" height="24" viewBox="0 0 18 24"><g fill="none" stroke="#7d2291"><circle cx="5.6" cy="3.9" r="2.0" stroke-width="1.45"/><circle cx="13.9" cy="5.9" r="2.0" stroke-width="1.45"/><circle cx="5.6" cy="18.9" r="2.0" stroke-width="1.45"/><path d="M5.6 5.9V16.9M13.8 7.9C13.8 12 11.6 13.3 5.8 14.6" stroke-width="2.3"/></g></svg>
<div class="t" style="left:249.9px;top:558.34px;font-size:12px;line-height:12px;color:#0073bb;font-weight:400;font-family:'Liberation Sans', sans-serif;">PillPack</div>
<svg style="position:absolute;left:403.55px;top:551.75px" width="27.5" height="27.5" viewBox="0 0 24 24"><defs><clipPath id="av4"><circle cx="12" cy="12" r="12"/></clipPath><linearGradient id="ag4" x1="0" y1="0" x2="1" y2="1"><stop offset="0" stop-color="#e2e2e2"/><stop offset="1" stop-color="#c9c9c9"/></linearGradient></defs><g clip-path="url(#av4)"><rect width="24" height="24" fill="url(#ag4)"/><path d="M6.6 10C6.4 6 8.6 3.6 12 3.6S17.6 6 17.4 10L18.2 18H15.6L15.8 11H8.2L8.4 18H5.8Z" fill="#3a2a22"/><ellipse cx="12" cy="25" rx="10.5" ry="8.5" fill="#eeeeee"/><rect x="10.2" y="13" width="3.6" height="5" fill="#dcb8a2"/><ellipse cx="12" cy="10.6" rx="4.3" ry="5.3" fill="#dcb8a2"/><path d="M7.6 9.6C7.4 6.2 9.2 4.6 12 4.6S16.6 6.2 16.4 9.6C15.6 7.6 14 7.2 12 7.2S8.4 7.6 7.6 9.6Z" fill="#3a2a22"/></g></svg>
<div class="t" style="left:433px;top:561.60px;font-size:11.7px;line-height:11.7px;color:#545b64;font-weight:400;font-family:'Liberation Sans', sans-serif;">Sofía Martínez</div>
<div class="t" style="left:574.2px;top:560.94px;font-size:12px;line-height:12px;color:#545b64;font-weight:400;font-family:'Liberation Sans', sans-serif;">Next run:</div>
<div class="t" style="left:628px;top:564.53px;font-size:10px;line-height:10px;color:#16191f;font-weight:400;font-family:'Liberation Mono', monospace;">08-17-2020, 8:00am PST</div>
<div style="position:absolute;left:800px;top:564.0999999999999px;width:3.6px;height:3.6px;background:#16191f;border-radius:50%;"></div>
<div style="position:absolute;left:805px;top:564.0999999999999px;width:3.6px;height:3.6px;background:#16191f;border-radius:50%;"></div>
<div style="position:absolute;left:810px;top:564.0999999999999px;width:3.6px;height:3.6px;background:#16191f;border-radius:50%;"></div>
<div style="position:absolute;left:216.3px;top:591.8499999999999px;width:611.4px;height:39.6px;background:#fff;border:1px solid #e1e4e4;border-radius:2px;box-sizing:border-box;box-shadow:0 1px 1px rgba(0,28,36,.15);"></div>
<svg style="position:absolute;left:220px;top:598.6px" width="18" height="24" viewBox="0 0 18 24"><g fill="none" stroke="#7d2291"><circle cx="5.6" cy="3.9" r="2.0" stroke-width="1.45"/><circle cx="13.9" cy="5.9" r="2.0" stroke-width="1.45"/><circle cx="5.6" cy="18.9" r="2.0" stroke-width="1.45"/><path d="M5.6 5.9V16.9M13.8 7.9C13.8 12 11.6 13.3 5.8 14.6" stroke-width="2.3"/></g></svg>
<div class="t" style="left:249.9px;top:604.99px;font-size:12px;line-height:12px;color:#0073bb;font-weight:400;font-family:'Liberation Sans', sans-serif;">TOM - Property Tax</div>
<svg style="position:absolute;left:405.05px;top:599.90px" width="24.5" height="24.5" viewBox="0 0 24 24"><defs><clipPath id="av5"><circle cx="12" cy="12" r="12"/></clipPath><linearGradient id="ag5" x1="0" y1="0" x2="1" y2="1"><stop offset="0" stop-color="#5b3f93"/><stop offset="1" stop-color="#8a5aa8"/></linearGradient></defs><g clip-path="url(#av5)"><rect width="24" height="24" fill="url(#ag5)"/><ellipse cx="12" cy="25" rx="10.5" ry="8.5" fill="#1e2a40"/><rect x="10.2" y="13" width="3.6" height="5" fill="#b98c72"/><ellipse cx="12" cy="10.6" rx="4.3" ry="5.3" fill="#b98c72"/><path d="M7.6 9.6C7.4 6.2 9.2 4.6 12 4.6S16.6 6.2 16.4 9.6C15.6 7.6 14 7.2 12 7.2S8.4 7.6 7.6 9.6Z" fill="#3a2a22"/></g></svg>
<div class="t" style="left:433px;top:608.25px;font-size:11.7px;line-height:11.7px;color:#545b64;font-weight:400;font-family:'Liberation Sans', sans-serif;">Steve Rogers</div>
<div class="t" style="left:574.2px;top:607.59px;font-size:12px;line-height:12px;color:#545b64;font-weight:400;font-family:'Liberation Sans', sans-serif;">Next run:</div>
<div class="t" style="left:628px;top:611.18px;font-size:10px;line-height:10px;color:#16191f;font-weight:400;font-family:'Liberation Mono', monospace;">08-17-2020, 8:00am PST</div>
<div style="position:absolute;left:800px;top:610.7499999999999px;width:3.6px;height:3.6px;background:#16191f;border-radius:50%;"></div>
<div style="position:absolute;left:805px;top:610.7499999999999px;width:3.6px;height:3.6px;background:#16191f;border-radius:50%;"></div>
<div style="position:absolute;left:810px;top:610.7499999999999px;width:3.6px;height:3.6px;background:#16191f;border-radius:50%;"></div>
<div style="position:absolute;left:216.3px;top:638.5px;width:611.4px;height:39.6px;background:#fff;border:1px solid #e1e4e4;border-radius:2px;box-sizing:border-box;box-shadow:0 1px 1px rgba(0,28,36,.15);"></div>
<svg style="position:absolute;left:220px;top:645.3px" width="18" height="24" viewBox="0 0 18 24"><g fill="none" stroke="#7d2291"><circle cx="5.6" cy="3.9" r="2.0" stroke-width="1.45"/><circle cx="13.9" cy="5.9" r="2.0" stroke-width="1.45"/><circle cx="5.6" cy="18.9" r="2.0" stroke-width="1.45"/><path d="M5.6 5.9V16.9M13.8 7.9C13.8 12 11.6 13.3 5.8 14.6" stroke-width="2.3"/></g></svg>
<div class="t" style="left:249.9px;top:651.64px;font-size:12px;line-height:12px;color:#0073bb;font-weight:400;font-family:'Liberation Sans', sans-serif;">Alexa</div>
<svg style="position:absolute;left:403.55px;top:645.05px" width="27.5" height="27.5" viewBox="0 0 24 24"><defs><clipPath id="av6"><circle cx="12" cy="12" r="12"/></clipPath><linearGradient id="ag6" x1="0" y1="0" x2="1" y2="1"><stop offset="0" stop-color="#ececec"/><stop offset="1" stop-color="#dcdcdc"/></linearGradient></defs><g clip-path="url(#av6)"><rect width="24" height="24" fill="url(#ag6)"/><ellipse cx="12" cy="25" rx="10.5" ry="8.5" fill="#2b3038"/><rect x="10.2" y="13" width="3.6" height="5" fill="#b98a6a"/><ellipse cx="12" cy="10.6" rx="4.3" ry="5.3" fill="#b98a6a"/><path d="M7.6 9.6C7.4 6.2 9.2 4.6 12 4.6S16.6 6.2 16.4 9.6C15.6 7.6 14 7.2 12 7.2S8.4 7.6 7.6 9.6Z" fill="#2a2420"/></g></svg>
<div class="t" style="left:433px;top:654.90px;font-size:11.7px;line-height:11.7px;color:#545b64;font-weight:400;font-family:'Liberation Sans', sans-serif;">Arnav Desai</div>
<div class="t" style="left:574.2px;top:654.24px;font-size:12px;line-height:12px;color:#545b64;font-weight:400;font-family:'Liberation Sans', sans-serif;">Next run:</div>
<div class="t" style="left:628px;top:657.84px;font-size:10px;line-height:10px;color:#16191f;font-weight:400;font-family:'Liberation Mono', monospace;">08-17-2020, 8:00am PST</div>
<div style="position:absolute;left:800px;top:657.4px;width:3.6px;height:3.6px;background:#16191f;border-radius:50%;"></div>
<div style="position:absolute;left:805px;top:657.4px;width:3.6px;height:3.6px;background:#16191f;border-radius:50%;"></div>
<div style="position:absolute;left:810px;top:657.4px;width:3.6px;height:3.6px;background:#16191f;border-radius:50%;"></div>
<div style="position:absolute;left:216.3px;top:685.15px;width:611.4px;height:39.6px;background:#fff;border:1px solid #e1e4e4;border-radius:2px;box-sizing:border-box;box-shadow:0 1px 1px rgba(0,28,36,.15);"></div>
<svg style="position:absolute;left:220px;top:691.9px" width="18" height="24" viewBox="0 0 18 24"><g fill="none" stroke="#7d2291"><circle cx="5.6" cy="3.9" r="2.0" stroke-width="1.45"/><circle cx="13.9" cy="5.9" r="2.0" stroke-width="1.45"/><circle cx="5.6" cy="18.9" r="2.0" stroke-width="1.45"/><path d="M5.6 5.9V16.9M13.8 7.9C13.8 12 11.6 13.3 5.8 14.6" stroke-width="2.3"/></g></svg>
<div class="t" style="left:249.9px;top:698.29px;font-size:12px;line-height:12px;color:#0073bb;font-weight:400;font-family:'Liberation Sans', sans-serif;">TMS</div>
<svg style="position:absolute;left:403.30px;top:691.45px" width="28" height="28" viewBox="0 0 24 24"><defs><clipPath id="av7"><circle cx="12" cy="12" r="12"/></clipPath><linearGradient id="ag7" x1="0" y1="0" x2="1" y2="1"><stop offset="0" stop-color="#b9c0b8"/><stop offset="1" stop-color="#8f9a8f"/></linearGradient></defs><g clip-path="url(#av7)"><rect width="24" height="24" fill="url(#ag7)"/><path d="M6.6 10C6.4 6 8.6 3.6 12 3.6S17.6 6 17.4 10L18.2 18H15.6L15.8 11H8.2L8.4 18H5.8Z" fill="#4a3428"/><ellipse cx="12" cy="25" rx="10.5" ry="8.5" fill="#c9ced3"/><rect x="10.2" y="13" width="3.6" height="5" fill="#d5a98c"/><ellipse cx="12" cy="10.6" rx="4.3" ry="5.3" fill="#d5a98c"/><path d="M7.6 9.6C7.4 6.2 9.2 4.6 12 4.6S16.6 6.2 16.4 9.6C15.6 7.6 14 7.2 12 7.2S8.4 7.6 7.6 9.6Z" fill="#4a3428"/></g></svg>
<div class="t" style="left:433px;top:701.55px;font-size:11.7px;line-height:11.7px;color:#545b64;font-weight:400;font-family:'Liberation Sans', sans-serif;">Julia Reed</div>
<div class="t" style="left:574.2px;top:700.89px;font-size:12px;line-height:12px;color:#545b64;font-weight:400;font-family:'Liberation Sans', sans-serif;">Next run:</div>
<div class="t" style="left:628px;top:704.49px;font-size:10px;line-height:10px;color:#16191f;font-weight:400;font-family:'Liberation Mono', monospace;">08-17-2020, 8:00am PST</div>
<div style="position:absolute;left:800px;top:704.05px;width:3.6px;height:3.6px;background:#16191f;border-radius:50%;"></div>
<div style="position:absolute;left:805px;top:704.05px;width:3.6px;height:3.6px;background:#16191f;border-radius:50%;"></div>
<div style="position:absolute;left:810px;top:704.05px;width:3.6px;height:3.6px;background:#16191f;border-radius:50%;"></div>
<div style="position:absolute;left:216.3px;top:731.8px;width:611.4px;height:39.6px;background:#fff;border:1px solid #e1e4e4;border-radius:2px;box-sizing:border-box;box-shadow:0 1px 1px rgba(0,28,36,.15);"></div>
<svg style="position:absolute;left:220px;top:738.6px" width="18" height="24" viewBox="0 0 18 24"><g fill="none" stroke="#7d2291"><circle cx="5.6" cy="3.9" r="2.0" stroke-width="1.45"/><circle cx="13.9" cy="5.9" r="2.0" stroke-width="1.45"/><circle cx="5.6" cy="18.9" r="2.0" stroke-width="1.45"/><path d="M5.6 5.9V16.9M13.8 7.9C13.8 12 11.6 13.3 5.8 14.6" stroke-width="2.3"/></g></svg>
<div class="t" style="left:249.9px;top:744.94px;font-size:12px;line-height:12px;color:#0073bb;font-weight:400;font-family:'Liberation Sans', sans-serif;">CAPEX 2.0</div>
<svg style="position:absolute;left:403.55px;top:738.35px" width="27.5" height="27.5" viewBox="0 0 24 24"><defs><clipPath id="av8"><circle cx="12" cy="12" r="12"/></clipPath><linearGradient id="ag8" x1="0" y1="0" x2="1" y2="1"><stop offset="0" stop-color="#6a6a66"/><stop offset="1" stop-color="#3a3a38"/></linearGradient></defs><g clip-path="url(#av8)"><rect width="24" height="24" fill="url(#ag8)"/><ellipse cx="12" cy="25" rx="10.5" ry="8.5" fill="#a9bccb"/><rect x="10.2" y="13" width="3.6" height="5" fill="#5e3c2a"/><ellipse cx="12" cy="10.6" rx="4.3" ry="5.3" fill="#5e3c2a"/><path d="M7.6 9.6C7.4 6.2 9.2 4.6 12 4.6S16.6 6.2 16.4 9.6C15.6 7.6 14 7.2 12 7.2S8.4 7.6 7.6 9.6Z" fill="#1e1a18"/></g></svg>
<div class="t" style="left:433px;top:748.20px;font-size:11.7px;line-height:11.7px;color:#545b64;font-weight:400;font-family:'Liberation Sans', sans-serif;">Aaron Fowler</div>
<div class="t" style="left:574.2px;top:747.54px;font-size:12px;line-height:12px;color:#545b64;font-weight:400;font-family:'Liberation Sans', sans-serif;">Next run:</div>
<div class="t" style="left:628px;top:751.13px;font-size:10px;line-height:10px;color:#16191f;font-weight:400;font-family:'Liberation Mono', monospace;">08-17-2020, 8:00am PST</div>
<div style="position:absolute;left:800px;top:750.6999999999999px;width:3.6px;height:3.6px;background:#16191f;border-radius:50%;"></div>
<div style="position:absolute;left:805px;top:750.6999999999999px;width:3.6px;height:3.6px;background:#16191f;border-radius:50%;"></div>
<div style="position:absolute;left:810px;top:750.6999999999999px;width:3.6px;height:3.6px;background:#16191f;border-radius:50%;"></div>
<div style="position:absolute;left:216.3px;top:778.45px;width:611.4px;height:39.6px;background:#fff;border:1px solid #e1e4e4;border-radius:2px;box-sizing:border-box;box-shadow:0 1px 1px rgba(0,28,36,.15);"></div>
<svg style="position:absolute;left:220px;top:785.2px" width="18" height="24" viewBox="0 0 18 24"><g fill="none" stroke="#7d2291"><circle cx="5.6" cy="3.9" r="2.0" stroke-width="1.45"/><circle cx="13.9" cy="5.9" r="2.0" stroke-width="1.45"/><circle cx="5.6" cy="18.9" r="2.0" stroke-width="1.45"/><path d="M5.6 5.9V16.9M13.8 7.9C13.8 12 11.6 13.3 5.8 14.6" stroke-width="2.3"/></g></svg>
<div class="t" style="left:249.9px;top:791.59px;font-size:12px;line-height:12px;color:#0073bb;font-weight:400;font-family:'Liberation Sans', sans-serif;">WholeFoods</div>
<svg style="position:absolute;left:403.55px;top:785.00px" width="27.5" height="27.5" viewBox="0 0 24 24"><defs><clipPath id="av9"><circle cx="12" cy="12" r="12"/></clipPath><linearGradient id="ag9" x1="0" y1="0" x2="1" y2="1"><stop offset="0" stop-color="#56616b"/><stop offset="1" stop-color="#3e4850"/></linearGradient></defs><g clip-path="url(#av9)"><rect width="24" height="24" fill="url(#ag9)"/><ellipse cx="12" cy="25" rx="10.5" ry="8.5" fill="#4f8288"/><rect x="10.2" y="13" width="3.6" height="5" fill="#c4946f"/><ellipse cx="12" cy="10.6" rx="4.3" ry="5.3" fill="#c4946f"/><path d="M7.6 9.6C7.4 6.2 9.2 4.6 12 4.6S16.6 6.2 16.4 9.6C15.6 7.6 14 7.2 12 7.2S8.4 7.6 7.6 9.6Z" fill="#5a3f2a"/></g></svg>
<div class="t" style="left:433px;top:794.85px;font-size:11.7px;line-height:11.7px;color:#545b64;font-weight:400;font-family:'Liberation Sans', sans-serif;">Benjamin Griffin</div>
<div class="t" style="left:574.2px;top:794.19px;font-size:12px;line-height:12px;color:#545b64;font-weight:400;font-family:'Liberation Sans', sans-serif;">Next run:</div>
<div class="t" style="left:628px;top:797.79px;font-size:10px;line-height:10px;color:#16191f;font-weight:400;font-family:'Liberation Mono', monospace;">08-17-2020, 8:00am PST</div>
<div style="position:absolute;left:800px;top:797.35px;width:3.6px;height:3.6px;background:#16191f;border-radius:50%;"></div>
<div style="position:absolute;left:805px;top:797.35px;width:3.6px;height:3.6px;background:#16191f;border-radius:50%;"></div>
<div style="position:absolute;left:810px;top:797.35px;width:3.6px;height:3.6px;background:#16191f;border-radius:50%;"></div>
</body></html>
